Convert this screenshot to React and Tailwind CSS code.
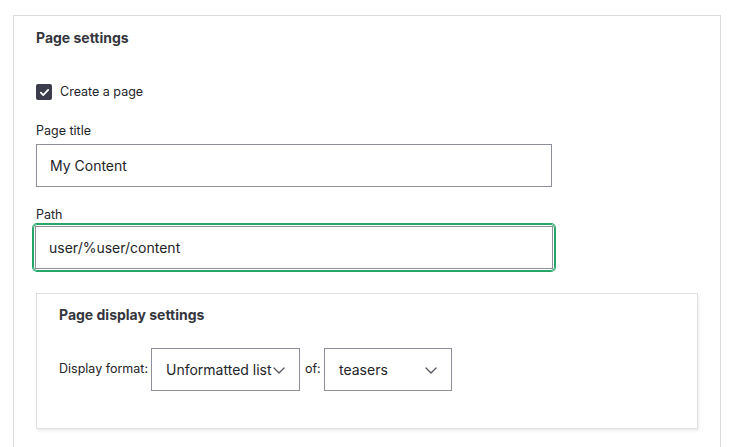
import React from 'react';

function Chevron() {
  return (
    <svg className="w-[14px] h-[14px] shrink-0" viewBox="0 0 14 14" fill="none" stroke="#545560" strokeWidth={1.3}>
      <path d="M2 5l5 5 5-5" strokeLinecap="round" strokeLinejoin="round" />
    </svg>
  );
}

export default function App() {
  return (
    <div className="w-[733px] h-[447px] overflow-hidden bg-white pt-[15px] pl-[13px] pr-[12px] text-[#232429]" style={{ fontFamily: 'Inter, "Noto Sans", sans-serif' }}>
      <div className="border border-[#dcdcdf] border-b-0 h-[460px] pl-[22px] pt-[13px]">
        {/* Page settings */}
        <h2 className="text-[14px] font-bold text-[#35363d] leading-[18px]">Page settings</h2>

        <label className="flex items-center mt-[36px] h-[18px]">
          <span className="w-[16px] h-[16px] rounded-[2px] bg-[#3b3d4d] flex items-center justify-center">
            <svg className="w-[11px] h-[11px]" viewBox="0 0 12 12" fill="none" stroke="white" strokeWidth={2}>
              <path d="M2 6.2l2.6 2.6L10 3.2" strokeLinecap="round" strokeLinejoin="round" />
            </svg>
          </span>
          <span className="ml-[8px] text-[12.5px] text-[#232429]">Create a page</span>
        </label>

        <div className="mt-[22px] text-[12.5px] leading-[16px]">Page title</div>
        <div className="mt-[5px] w-[516px] h-[43px] border border-[#8e9099] flex items-center pl-[13px] text-[14px]">My Content</div>

        <div className="mt-[20px] text-[12.5px] leading-[16px]">Path</div>
        <div className="mt-[1px] -ml-[3px] w-[522px] p-[1px] border-[1px] border-[#26a769] rounded-[4px] ring-1 ring-[#26a769]">
          <div className="h-[43px] border border-[#8e9099] flex items-center pl-[13px] text-[14px]">user/%user/content</div>
        </div>

        {/* Page display settings */}
        <div className="mt-[22px] w-[662px] h-[136px] border border-[#e0e0e3] shadow-[1px_2px_3px_rgba(0,0,0,0.08)] pl-[22px] pt-[12px]">
          <h3 className="text-[14px] font-bold text-[#35363d] leading-[18px]">Page display settings</h3>
          <div className="mt-[24px] flex items-center text-[12.5px] whitespace-nowrap">
            <span className="w-[92px] shrink-0">Display format:</span>
            <div className="w-[149px] h-[43px] shrink-0 border border-[#8e9099] flex items-center pl-[14px] pr-[8px] text-[14px]">
              <span>Unformatted list</span>
              <Chevron />
            </div>
            <span className="ml-[5px] w-[19px] shrink-0">of:</span>
            <div className="w-[128px] h-[43px] shrink-0 border border-[#8e9099] flex items-center justify-between pl-[14px] pr-[13px] text-[14px]">
              <span>teasers</span>
              <Chevron />
            </div>
          </div>
        </div>
      </div>
    </div>
  );
}
